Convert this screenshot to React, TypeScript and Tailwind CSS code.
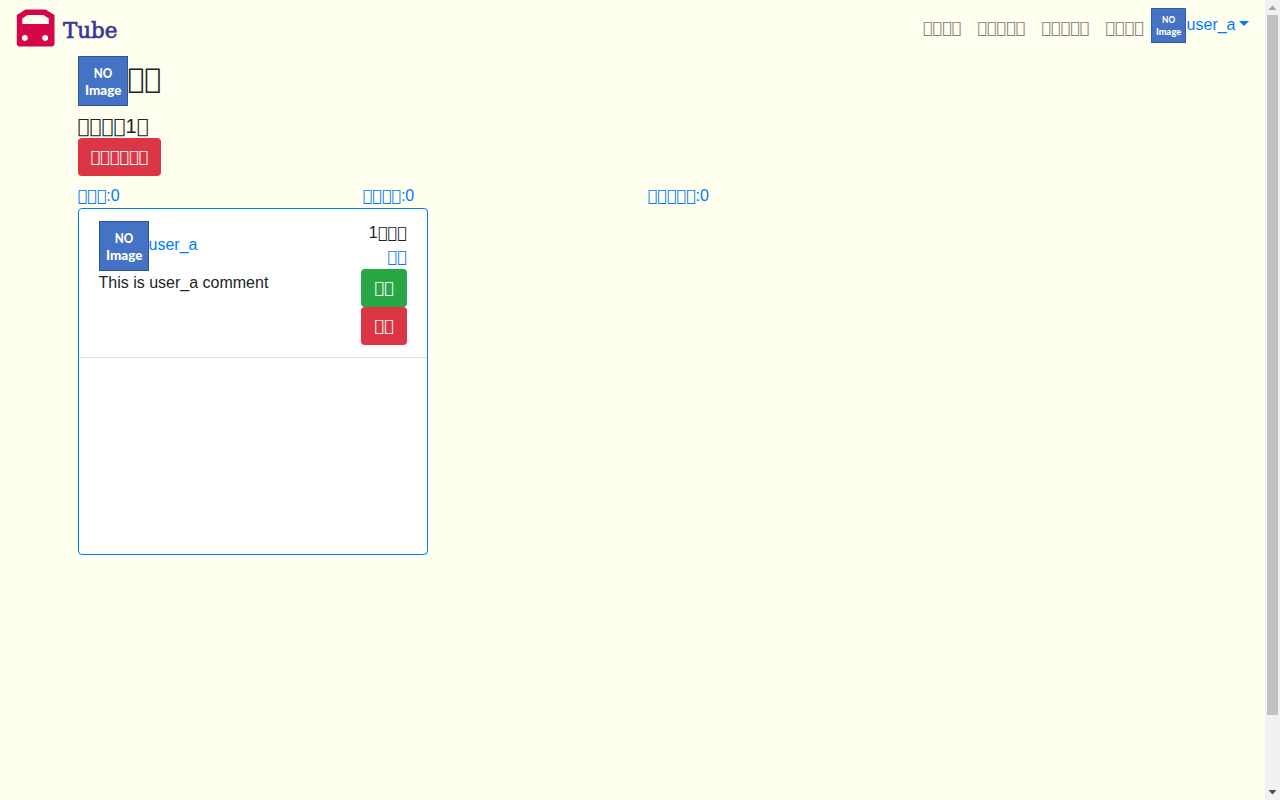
function Glyphs({ count }: { count: number }) {
  return <span className="font-['DejaVu_Sans'] leading-[0]">{'\uE123'.repeat(count)}</span>;
}

function NoImage({ className }: { className: string }) {
  return (
    <svg viewBox="0 0 50 50" className={className} aria-label="NO Image">
      <rect width="50" height="50" fill="#2f5597" />
      <rect x="1" y="1" width="48" height="48" fill="#4472c4" />
      <g fill="#fff" fontFamily="Lato, sans-serif" fontWeight="900">
        <text x="15.8" y="21.5" fontSize="13" textLength="18.6" lengthAdjust="spacingAndGlyphs">NO</text>
        <text x="7" y="39" fontSize="13" textLength="36.4" lengthAdjust="spacingAndGlyphs">Image</text>
      </g>
    </svg>
  );
}

function Logo() {
  return (
    <a href="#" className="block h-10 w-[110px]">
      <svg viewBox="0 0 110 40" width="110" height="40">
        <path
          fillRule="evenodd"
          fill="#d4054a"
          d="M9.5 1.5H29.5L38.5 7V35.5Q38.5 38.5 35.5 38.5H3.5Q.8 38.5 .8 35.5V7ZM11.5 7L6.3 10.5V16H32.8V10.5L27.5 7ZM9.6 27a3 3 0 1 0 .01 5.8a3 3 0 0 0 0-5.8ZM29.9 27a3 3 0 1 0 .01 5.8a3 3 0 0 0 0-5.8Z"
        />
        <text x="47" y="29.8" fontSize="22.5" fill="#3a3599" stroke="#3a3599" strokeWidth=".7" fontFamily="DejaVu Serif, serif" textLength="54.5" lengthAdjust="spacingAndGlyphs">
          Tube
        </text>
      </svg>
    </a>
  );
}

export default function App() {
  return (
    <div className="flex h-[800px] overflow-hidden bg-[#fffff0] font-['Liberation_Sans',Arial,sans-serif] text-base leading-6 text-[#212529]">
      <div className="w-[1265px] shrink-0">
        <nav className="flex h-14 items-center justify-between pr-[15.5px] pl-4">
          <Logo />
          <div className="flex h-10 items-center text-[#80807a]">
            {[4, 5, 5, 4].map((n, i) => (
              <a key={i} href="#" className="px-2"><Glyphs count={n} /></a>
            ))}
            <a href="#" className="flex items-start self-start text-[#007bff]">
              <NoImage className="-ml-[0.6px] mr-[0.6px] size-[35px]" />
              <span className="mt-[5px]">user_a</span>
              <svg width="10" height="5" viewBox="0 0 10 5" className="mt-[13px] mr-[0.6px] ml-[3.4px]" fill="currentColor"><path d="M0 0h10L5 5z" /></svg>
            </a>
          </div>
        </nav>

        <main className="mx-auto w-[1110px]">
          <h3 className="mb-2 flex h-[50px] items-center text-[28px] leading-[34px]">
            <NoImage className="size-[50px]" />
            <span className="-mt-1"><Glyphs count={2} /></span>
          </h3>
          <h5 className="h-6 text-xl leading-6"><Glyphs count={4} />1<Glyphs count={1} /></h5>
          <button className="block h-[38px] rounded bg-[#dc3545] px-[13px] text-white"><Glyphs count={6} /></button>

          <div className="mt-2 flex text-[#007bff]">
            {[3, 4, 5].map((n) => (
              <a key={n} href="#" className="w-[285px]"><Glyphs count={n} />:0</a>
            ))}
          </div>

          <section className="h-[347px] w-[350px] rounded border border-[#007bff] bg-white">
            <article className="flex justify-between border-b border-[#dfdfdf] px-5 py-3">
              <div>
                <a href="#" className="flex items-center text-[#007bff]">
                  <NoImage className="size-[50px]" />
                  <span className="-mt-0.5">user_a</span>
                </a>
                <p>This is user_a comment</p>
              </div>
              <div className="flex flex-col items-end">
                <span>1<Glyphs count={3} /></span>
                <a href="#" className="text-[#007bff]"><Glyphs count={2} /></a>
                <button className="h-[38px] rounded bg-[#28a745] px-[13px] text-white"><Glyphs count={2} /></button>
                <button className="h-[38px] rounded bg-[#dc3545] px-[13px] text-white"><Glyphs count={2} /></button>
              </div>
            </article>
          </section>
        </main>
      </div>

      <div className="flex w-[15px] flex-col items-center bg-[#f1f1f1]">
        <svg width="15" height="15" viewBox="0 0 15 15" fill="#a3a3a3"><path d="M3.5 10h8L7.5 5.5z" /></svg>
        <div className="h-[700px] w-[11px] bg-[#c1c1c1]" />
        <svg className="mt-auto" width="15" height="15" viewBox="0 0 15 15" fill="#505050"><path d="M3.5 5h8L7.5 9.5z" /></svg>
      </div>
    </div>
  );
}
